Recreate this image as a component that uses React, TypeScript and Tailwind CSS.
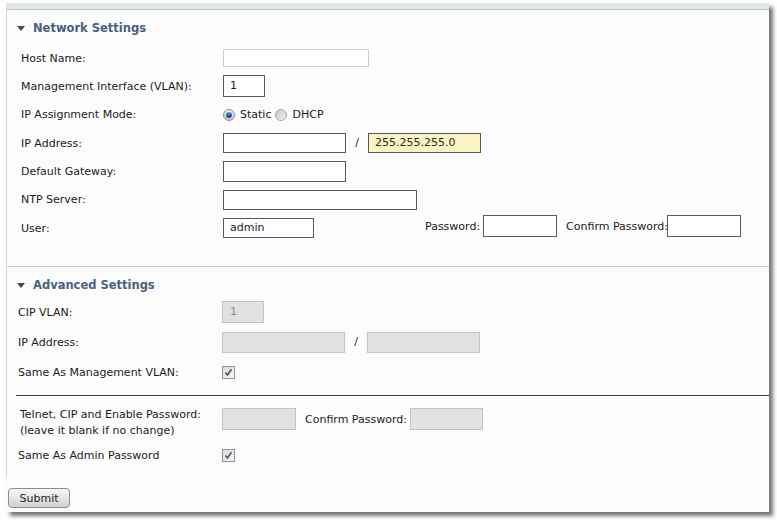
import React from "react";

const Tri = () => (
  <svg width="8" height="5" viewBox="0 0 8 5" className="shrink-0">
    <path d="M0 0 L8 0 L4 5 Z" fill="#3b4b5c" />
  </svg>
);

const Check = () => (
  <span className="w-[13px] h-[13px] border border-[#8e949a] bg-gradient-to-br from-[#dcdcdc] to-[#f7f7f7] flex items-center justify-center">
    <svg width="9" height="9" viewBox="0 0 9 9">
      <path d="M1.5 4.5 L3.5 7 L7.5 1.2" fill="none" stroke="#45556a" strokeWidth="1.6" />
    </svg>
  </span>
);

const RadioOn = () => (
  <span className="w-[12px] h-[12px] shrink-0 rounded-full border border-[#8c8c8c] bg-gradient-to-b from-[#f0f0f0] to-[#c8c8c8] flex items-center justify-center">
    <span className="w-[6px] h-[6px] rounded-full bg-gradient-to-b from-[#5a9ae0] to-[#0f3f86]" />
  </span>
);

const RadioOff = () => (
  <span className="block w-[12px] h-[12px] shrink-0 rounded-full border border-[#a8a8a8] bg-gradient-to-br from-[#c4c4c4] to-[#f5f5f5]" />
);

const L = ({ w, children }: { w: string; children: React.ReactNode }) => (
  <span className={`${w} pt-[2px]`}>{children}</span>
);

export default function App() {
  const font = { fontFamily: '"DejaVu Sans", Verdana, sans-serif' };
  return (
    <div className="w-[777px] h-[525px] bg-white overflow-hidden text-[11px] text-[#1b1b1b]" style={font}>
      <div className="ml-[6px] mt-[3px] w-[763px] h-[509px] bg-[#fcfcfc] shadow-[4px_4px_4px_rgba(0,0,0,0.55)] flex flex-col">
        <div className="h-[6px] bg-[#e6e6e6]" />
        <div className="h-[1px] bg-[#a3cdd5]" />
        <div className="border-l border-[#d6d6d6] h-[467px] flex flex-col">
          {/* Network Settings */}
          <div className="pt-[8px]">
            <div className="h-[20px] flex items-center pl-[10px] gap-[8px]">
              <Tri />
              <span className="text-[11.5px] font-bold text-[#48627d] pt-[1px]">Network Settings</span>
            </div>
            <div className="mt-[6px] pl-[14px] flex flex-col">
              <div className="h-[28px] flex items-center">
                <L w="w-[202px]">Host Name:</L>
                <span className="w-[146px] h-[18px] border border-[#cdcdcd] bg-white" />
              </div>
              <div className="h-[28px] flex items-center">
                <L w="w-[202px]">Management Interface (VLAN):</L>
                <span className="w-[42px] h-[22px] border border-[#4e5a66] bg-white flex items-center pl-[6px]">1</span>
              </div>
              <div className="h-[29px] flex items-center">
                <L w="w-[202px]">IP Assignment Mode:</L>
                <RadioOn />
                <span className="ml-[5px] pt-[2px]">Static</span>
                <span className="ml-[4px] flex items-center"><RadioOff /></span>
                <span className="ml-[5px] pt-[2px]">DHCP</span>
              </div>
              <div className="h-[28px] flex items-center">
                <L w="w-[202px]">IP Address:</L>
                <span className="w-[123px] h-[20px] border border-[#4e5a66] bg-white" />
                <span className="w-[22px] text-center">/</span>
                <span className="w-[113px] h-[20px] border border-[#4e5a66] bg-[#fbf3c1] flex items-center pl-[6px] text-[#2a2a2a]">255.255.255.0</span>
              </div>
              <div className="h-[28px] flex items-center">
                <L w="w-[202px]">Default Gateway:</L>
                <span className="w-[123px] h-[21px] border border-[#4e5a66] bg-white" />
              </div>
              <div className="h-[29px] flex items-center">
                <L w="w-[202px]">NTP Server:</L>
                <span className="w-[194px] h-[20px] border border-[#4e5a66] bg-white" />
              </div>
              <div className="h-[28px] flex items-center">
                <L w="w-[202px]">User:</L>
                <span className="w-[91px] h-[20px] border border-[#4e5a66] bg-white flex items-center pl-[6px]">admin</span>
                <div className="flex items-center -mt-[4px]">
                  <span className="ml-[111px] pt-[2px]">Password:</span>
                  <span className="ml-[3px] w-[74px] h-[22px] border border-[#4e5a66] bg-white" />
                  <span className="ml-[9px] w-[101px] whitespace-nowrap pt-[2px]">Confirm Password:</span>
                  <span className="w-[74px] h-[22px] border border-[#4e5a66] bg-white" />
                </div>
              </div>
            </div>
          </div>
          <div className="mt-[24px] h-[1px] bg-[#b6d7de]" />
          {/* Advanced Settings */}
          <div className="pt-[8px]">
            <div className="h-[20px] flex items-center pl-[10px] gap-[8px]">
              <Tri />
              <span className="text-[11.5px] font-bold text-[#48627d] pt-[1px]">Advanced Settings</span>
            </div>
            <div className="mt-[3px] pl-[11px] flex flex-col">
              <div className="h-[28px] flex items-center">
                <L w="w-[204px]">CIP VLAN:</L>
                <span className="w-[42px] h-[22px] border border-[#c3c3c3] bg-[#e1e1e1] flex items-center pl-[7px] text-[#8a8a8a]">1</span>
              </div>
              <div className="h-[32px] flex items-center">
                <L w="w-[204px]">IP Address:</L>
                <span className="w-[123px] h-[21px] border border-[#c3c3c3] bg-[#e1e1e1]" />
                <span className="w-[22px] text-center">/</span>
                <span className="w-[113px] h-[21px] border border-[#c3c3c3] bg-[#e1e1e1]" />
              </div>
              <div className="h-[29px] flex items-center">
                <L w="w-[204px]">Same As Management VLAN:</L>
                <Check />
              </div>
            </div>
          </div>
          <div className="mt-[8px] ml-[9px] h-[1px] bg-[#3c3c3c]" />
          <div className="mt-[10px] pl-[13px] flex items-start">
            <span className="w-[202px] leading-[16px] pt-[1px]">
              Telnet, CIP and Enable Password:
              <br />
              (leave it blank if no change)
            </span>
            <div className="mt-[2px] flex items-center">
              <span className="w-[74px] h-[22px] border border-[#c3c3c3] bg-[#e1e1e1]" />
              <span className="ml-[9px] w-[105px] whitespace-nowrap pt-[2px]">Confirm Password:</span>
              <span className="w-[73px] h-[22px] border border-[#c3c3c3] bg-[#e1e1e1]" />
            </div>
          </div>
          <div className="mt-[6px] h-[20px] pl-[11px] flex items-center">
            <L w="w-[204px]">Same As Admin Password</L>
            <Check />
          </div>
        </div>
        <div className="mt-[11px] ml-[2px]">
          <button className="w-[62px] h-[20px] rounded-[4px] border border-[#8c8c8c] bg-gradient-to-b from-[#f7f7f7] via-[#e6e6e6] to-[#cfcfcf] text-[11px] text-[#222] flex items-center justify-center leading-none" style={font}>
            Submit
          </button>
        </div>
      </div>
    </div>
  );
}
